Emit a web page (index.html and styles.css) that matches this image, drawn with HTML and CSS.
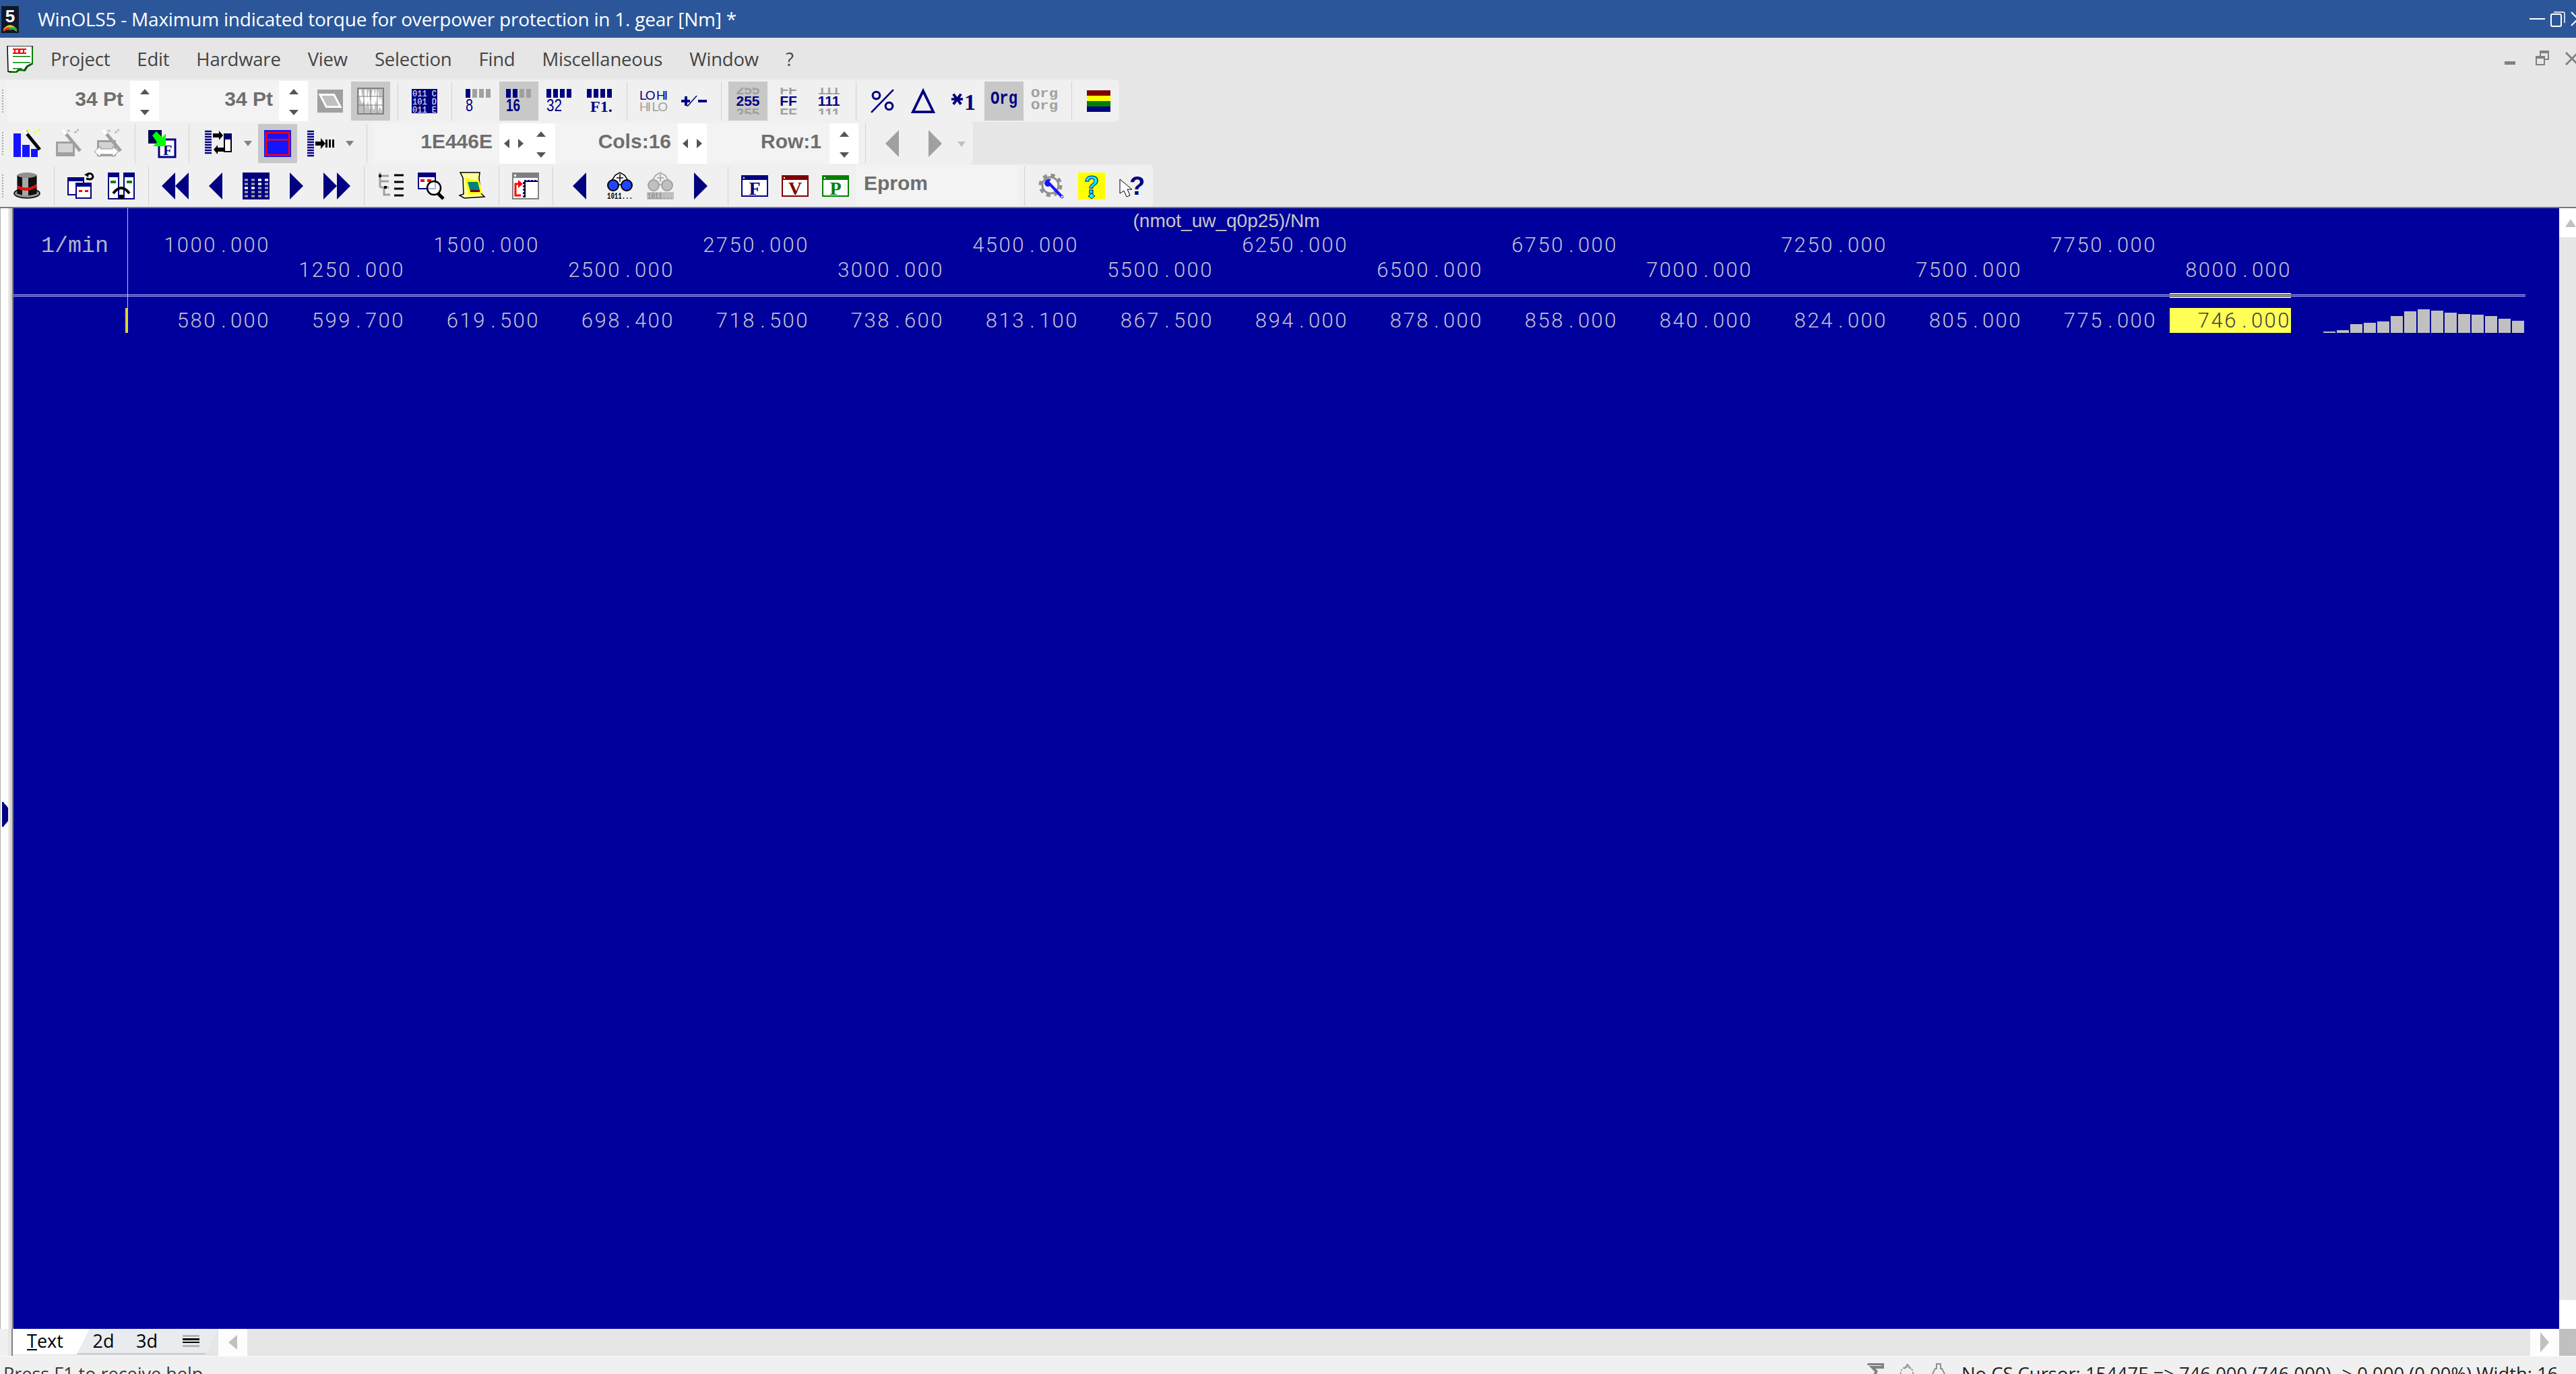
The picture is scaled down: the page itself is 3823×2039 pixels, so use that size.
FILE: index.html
```html
<!DOCTYPE html>
<html lang="en">
<head>
<meta charset="utf-8">
<title>WinOLS5</title>
<link rel="stylesheet" href="styles.css">
</head>
<body>
<div class="app">
  <header class="titlebar">
    <svg class="app-logo" viewBox="0 0 26 40"><rect width="26" height="40" fill="#101828"/><path d="M3 34 Q13 22 23 34 L23 38 Q13 30 3 38Z" fill="#e0c020"/><path d="M3 36 Q8 30 13 32 L13 36 Q8 34 3 38Z" fill="#e03020"/><path d="M13 32 Q19 30 23 34 L23 37 Q18 33 13 36Z" fill="#20b040"/><text x="13" y="24" class="logo-5">5</text></svg>
    <span class="title-text">WinOLS5 - Maximum indicated torque for overpower protection in 1. gear [Nm] *</span>
    <div class="win-ctrls">
      <svg class="wc-min" viewBox="0 0 23 3"><rect width="23" height="2" fill="#fff"/></svg>
      <svg class="wc-res" viewBox="0 0 22 24"><rect x="1" y="5" width="15" height="18" rx="2" fill="none" stroke="#fff" stroke-width="2"/><path d="M5 2H19Q21 2 21 4V18" fill="none" stroke="#fff" stroke-width="1.5"/></svg>
      <svg class="wc-x" viewBox="0 0 22 22"><path d="M1 1L21 21M21 1L1 21" stroke="#fff" stroke-width="2"/></svg>
    </div>
  </header>

  <nav class="menubar">
    <svg class="doc-icon" viewBox="0 0 40 40"><path d="M1 0H38V26L30 30L26 36L18 35L13 39L2 38Z" fill="#fff" stroke="#000" stroke-width="1.5"/><path d="M38 4V27L31 31L27 37L19 36L13 40H3" fill="none" stroke="#008000" stroke-width="2"/><rect x="9" y="4" width="20" height="2" fill="#f00"/><rect x="9" y="10" width="20" height="2" fill="#f00"/><rect x="11" y="5" width="2" height="6" fill="#f00"/><rect x="17" y="5" width="3" height="6" fill="#f00"/><rect x="24" y="5" width="2" height="6" fill="#f00"/><rect x="9" y="15" width="26" height="1.5" fill="#008000"/><rect x="9" y="24" width="26" height="1.5" fill="#008000"/><rect x="9" y="33" width="14" height="1.5" fill="#008000"/></svg>
    <span class="menu-item">Project</span>
    <span class="menu-item">Edit</span>
    <span class="menu-item">Hardware</span>
    <span class="menu-item">View</span>
    <span class="menu-item">Selection</span>
    <span class="menu-item">Find</span>
    <span class="menu-item">Miscellaneous</span>
    <span class="menu-item">Window</span>
    <span class="menu-item">?</span>
    <div class="mdi-ctrls">
      <svg class="mdi-min" viewBox="0 0 16 5"><rect width="16" height="5" fill="#808080"/></svg>
      <svg class="mdi-res" viewBox="0 0 20 22"><rect x="7" y="1" width="12" height="12" fill="#e6e6e6" stroke="#808080" stroke-width="2"/><rect x="7" y="0" width="13" height="4" fill="#808080"/><rect x="1" y="9" width="12" height="12" fill="#e6e6e6" stroke="#808080" stroke-width="2"/><rect x="1" y="8" width="13" height="4" fill="#808080"/></svg>
      <svg class="mdi-x" viewBox="0 0 20 20"><path d="M1 1L19 19M19 1L1 19" stroke="#808080" stroke-width="3"/></svg>
    </div>
  </nav>

  <div class="tb tb-1">
    <div class="grip"></div>
    <div class="field f34a">34 Pt</div>
    <div class="spin"><i class="t-up"></i><i class="t-dn"></i></div>
    <div class="field f34b">34 Pt</div>
    <div class="spin"><i class="t-up"></i><i class="t-dn"></i></div>
    <div class="gap3"></div>
    <div class="btn"><svg class="ic" viewBox="0 0 40 36"><rect width="40" height="36" fill="#a0a0a0"/><polygon points="4,8 26,8 36,27 14,27" fill="#c0c0c0" stroke="#fff" stroke-width="3"/></svg></div>
    <div class="btn on"><svg class="ic ic40" viewBox="0 0 40 40"><rect x="1" y="1" width="38" height="38" fill="#c0c0c0" stroke="#808080" stroke-width="2"/><polygon points="3,3 6,3 8,16 10,3 14,3 15,18 17,3 20,20 23,3 25,3 26,14 28,3 31,3 34,20 36,10 37,34 33,28 31,36 28,18 25,34 21,24 19,34 16,20 13,30 10,20 7,24 3,12" fill="#fff"/><path d="M10 2V38M20 2V38M30 2V38M2 13H38M2 26H38" stroke="#808080" stroke-width="1"/></svg></div>
    <div class="sep"></div>
    <div class="btn"><svg class="ic" viewBox="0 0 38 36"><rect width="38" height="36" fill="#000080"/><text class="mono-w" x="1" y="11" textLength="36" lengthAdjust="spacingAndGlyphs">011 C</text><text class="mono-w" x="1" y="23" textLength="36" lengthAdjust="spacingAndGlyphs">101 D</text><text class="mono-w" x="1" y="35" textLength="36" lengthAdjust="spacingAndGlyphs">011 E</text></svg></div>
    <div class="sep"></div>
    <div class="btn"><svg class="ic" viewBox="0 0 38 36"><rect width="7" height="13" class="n"/><rect x="10" width="7" height="13" class="g"/><rect x="20" width="7" height="13" class="g"/><rect x="30" width="7" height="13" class="g"/><text class="bits" x="0" y="33" textLength="11" lengthAdjust="spacingAndGlyphs">8</text></svg></div>
    <div class="btn on"><svg class="ic" viewBox="0 0 38 36"><rect width="7" height="13" class="n"/><rect x="10" width="7" height="13" class="n"/><rect x="20" width="7" height="13" class="g"/><rect x="30" width="7" height="13" class="g"/><text class="bits bits-b" x="0" y="33" textLength="21" lengthAdjust="spacingAndGlyphs">16</text></svg></div>
    <div class="btn"><svg class="ic" viewBox="0 0 38 36"><rect width="7" height="13" class="n"/><rect x="10" width="7" height="13" class="n"/><rect x="20" width="7" height="13" class="n"/><rect x="30" width="7" height="13" class="n"/><text class="bits" x="0" y="33" textLength="23" lengthAdjust="spacingAndGlyphs">32</text></svg></div>
    <div class="btn"><svg class="ic" viewBox="0 0 38 36"><rect width="7" height="13" class="n"/><rect x="10" width="7" height="13" class="n"/><rect x="20" width="7" height="13" class="n"/><rect x="30" width="7" height="13" class="n"/><text class="bits-s" x="5" y="34">F1.</text></svg></div>
    <div class="sep"></div>
    <div class="btn"><svg class="ic ic-lohi" viewBox="0 0 42 36"><text class="lohi n" x="0" y="16" textLength="42">LO HI</text><text class="lohi g" x="0" y="33" textLength="42">HI LO</text></svg></div>
    <div class="btn"><svg class="ic" viewBox="0 0 38 16"><rect x="0" y="6" width="13" height="4" class="n"/><rect x="5" y="1" width="4" height="14" class="n"/><polygon points="8,16 22,0 24,0 10,16" class="n"/><rect x="25" y="6" width="13" height="4" class="n"/></svg></div>
    <div class="sep"></div>
    <div class="btn on"><svg class="ic ic-num" viewBox="0 0 38 40"><svg width="38" height="10"><text class="num g" x="19" y="10">255</text></svg><text class="num n" x="19" y="27">255</text><svg y="30" width="38" height="10"><text class="num g" x="19" y="15">255</text></svg></svg></div>
    <div class="btn"><svg class="ic ic-num" viewBox="0 0 38 40"><svg width="38" height="10"><text class="num g" x="19" y="10">FF</text></svg><text class="num n" x="19" y="27">FF</text><svg y="30" width="38" height="10"><text class="num g" x="19" y="15">FF</text></svg></svg></div>
    <div class="btn"><svg class="ic ic-num" viewBox="0 0 38 40"><svg width="38" height="10"><text class="num g" x="19" y="10">111</text></svg><text class="num n" x="19" y="27">111</text><svg y="30" width="38" height="10"><text class="num g" x="19" y="15">111</text></svg></svg></div>
    <div class="sep"></div>
    <div class="btn"><svg class="ic" viewBox="0 0 34 34"><circle cx="8" cy="9" r="5" fill="none" stroke="#000080" stroke-width="3"/><circle cx="26" cy="24" r="5" fill="none" stroke="#000080" stroke-width="3"/><path d="M1 33L32 1" stroke="#000080" stroke-width="2.5"/></svg></div>
    <div class="btn"><svg class="ic" viewBox="0 0 38 38"><polygon points="19,3 35,36 3,36" fill="none" stroke="#000080" stroke-width="4"/></svg></div>
    <div class="btn"><svg class="ic" viewBox="0 0 40 30"><path d="M1 12H19M4 4L16 20M16 4L4 20" stroke="#000080" stroke-width="4"/><text class="one" x="21" y="29">1</text></svg></div>
    <div class="btn on"><svg class="ic ic-org" viewBox="0 0 40 28"><text class="org n" x="0" y="18" textLength="40" lengthAdjust="spacingAndGlyphs">Org</text></svg></div>
    <div class="btn"><svg class="ic ic-orgs" viewBox="0 0 40 38"><text class="org-s g" x="0" y="13" textLength="40" lengthAdjust="spacingAndGlyphs">Org</text><text class="org-s g" x="0" y="31" textLength="40" lengthAdjust="spacingAndGlyphs">Org</text></svg></div>
    <div class="sep"></div>
    <div class="btn"><svg class="ic ic-flag" viewBox="0 0 35 32"><rect width="35" height="8" fill="#800000"/><rect y="8" width="35" height="8" fill="#ff0"/><rect y="16" width="35" height="8" fill="#008000"/><rect y="24" width="35" height="8" fill="#000080"/></svg></div>
  </div>

  <div class="tb tb-2">
    <div class="grip"></div>
    <div class="btn"><svg class="ic ic40" viewBox="0 0 40 40"><rect x="0" y="5" width="11" height="35" fill="#1414ff"/><rect x="13" y="22" width="11" height="18" fill="#1414ff"/><rect x="26" y="28" width="10" height="12" fill="#1414ff"/><path d="M17 2L39 29" stroke="#000" stroke-width="5"/><path d="M15 0L20 6" stroke="#fff" stroke-width="5"/><path d="M20 0h3M31 3h3M36 0h3" stroke="#ff0" stroke-width="3"/></svg></div>
    <div class="btn"><svg class="ic ic40" viewBox="0 0 40 40"><rect x="3" y="17" width="28" height="22" fill="#a0a0a0"/><rect x="6" y="20" width="22" height="13" fill="#d4d4d4"/><path d="M15 2L39 31" stroke="#a0a0a0" stroke-width="5"/><path d="M13 0L18 6" stroke="#fff" stroke-width="5"/><path d="M20 1h4M30 3h4M34 0h3" stroke="#c0c0c0" stroke-width="3"/></svg></div>
    <div class="btn"><svg class="ic ic40" viewBox="0 0 40 40"><rect x="4" y="15" width="28" height="24" fill="#a0a0a0"/><rect x="7" y="18" width="22" height="11" fill="#d4d4d4"/><path d="M15 2L39 31" stroke="#a0a0a0" stroke-width="5"/><path d="M13 0L18 6" stroke="#fff" stroke-width="5"/><path d="M20 1h4M30 3h4M34 0h3" stroke="#c0c0c0" stroke-width="3"/><polygon points="0,32 9,24 9,28 27,28 27,24 36,32 27,40 27,36 9,36 9,40" fill="#fff" stroke="#909090" stroke-width="1"/></svg></div>
    <div class="sep"></div>
    <div class="btn"><svg class="ic ic40" viewBox="0 0 40 40"><rect width="20" height="20" fill="#000050"/><rect x="16" y="14" width="24" height="26" fill="#fff" stroke="#000080" stroke-width="3"/><text class="serif-f" x="22" y="37">F</text><polygon points="6,8 12,2 21,11 26,5 26,24 7,24 13,18" fill="#0f0"/></svg></div>
    <div class="sep"></div>
    <div class="split split-a">
      <svg class="ic ic40" viewBox="0 0 40 40"><path d="M0 2h10M0 6h10M0 10h10M0 14h10M0 18h10M0 22h10M0 26h10M0 30h10M0 34h10" stroke="#000080" stroke-width="2.6"/><polygon points="13,5 22,5 22,1 28,8 22,15 22,11 13,11" fill="#000" transform="translate(-1,0)"/><polygon points="28,26 19,26 19,22 13,29 19,36 19,32 28,32" fill="#000"/><rect x="29" y="6" width="10" height="26" fill="#fff" stroke="#000" stroke-width="2"/><rect x="29" y="6" width="10" height="8" fill="#000080"/></svg>
      <i class="caret"></i>
    </div>
    <div class="btn on"><svg class="ic ic40" viewBox="0 0 40 40"><rect width="40" height="40" fill="#1414ff"/><rect x="3" y="4" width="34" height="33" fill="none" stroke="#f00" stroke-width="2.5"/><rect x="3" y="13" width="34" height="2.5" fill="#f00"/></svg></div>
    <div class="split split-b">
      <svg class="ic ic40" viewBox="0 0 40 40"><path d="M0 2h10M0 6h10M0 10h10M0 14h10M0 18h10M0 22h10M0 26h10M0 30h10M0 34h10M0 38h10" stroke="#000080" stroke-width="2.6"/><polygon points="12,17 20,17 20,12 27,20 20,28 20,23 12,23" fill="#000"/><rect x="27" y="14" width="3" height="12" fill="#000"/><rect x="32" y="14" width="3" height="12" fill="#000"/><rect x="37" y="14" width="3" height="12" fill="#000"/></svg>
      <i class="caret"></i>
    </div>
    <div class="sep"></div>
    <div class="field faddr">1E446E</div>
    <div class="spin spin-wide">
      <div class="lr"><i class="t-lf"></i><i class="t-rt"></i></div>
      <div class="ud"><i class="t-up"></i><i class="t-dn"></i></div>
    </div>
    <div class="field fcols">Cols:16</div>
    <div class="spin"><div class="lr lr-tight"><i class="t-lf"></i><i class="t-rt"></i></div></div>
    <div class="field frow">Row:1</div>
    <div class="spin"><i class="t-up"></i><i class="t-dn"></i></div>
    <div class="sep"></div>
    <div class="btn"><svg class="ic ic-nav" viewBox="0 0 20 40"><polygon points="0,20 20,0 20,40" fill="#a0a0a0"/></svg></div>
    <div class="btn btn-shift"><svg class="ic ic-nav" viewBox="0 0 20 40"><polygon points="0,0 20,20 0,40" fill="#a0a0a0"/></svg></div>
    <i class="caret caret-dim"></i>
  </div>

  <div class="tb tb-3">
    <div class="grip"></div>
    <div class="btn"><svg class="ic ic40" viewBox="0 0 40 40"><ellipse cx="20" cy="31" rx="19" ry="7" fill="#909090" stroke="#000" stroke-width="1.5"/><path d="M6 4Q20 -2 34 4V31Q20 36 6 31Z" fill="#111" stroke="#000"/><rect x="13" y="3" width="9" height="31" fill="#a8a8a8"/><ellipse cx="20" cy="4" rx="14" ry="4" fill="#909090"/><path d="M6 19Q20 27 34 17V22Q20 31 6 24Z" fill="#e01010"/></svg></div>
    <div class="sep"></div>
    <div class="btn"><svg class="ic ic40" viewBox="0 0 40 40"><rect x="1" y="8" width="23" height="25" fill="#fff" stroke="#000080" stroke-width="2"/><rect x="1" y="8" width="23" height="5" fill="#000080"/><rect x="13" y="16" width="22" height="22" fill="#fff" stroke="#000080" stroke-width="2"/><rect x="13" y="16" width="22" height="5" fill="#000080"/><rect x="17" y="26" width="5" height="3" fill="#f00"/><rect x="26" y="26" width="5" height="3" fill="#f00"/><path d="M28 9Q37 12 38 6Q37 0 30 2" fill="none" stroke="#000" stroke-width="3"/><polygon points="25,3 32,0 31,7" fill="#000"/></svg></div>
    <div class="btn"><svg class="ic ic40" viewBox="0 0 40 40"><rect x="1" y="1" width="15" height="38" fill="#fff" stroke="#000080" stroke-width="2"/><rect x="24" y="1" width="15" height="38" fill="#fff" stroke="#000080" stroke-width="2"/><rect x="1" y="1" width="15" height="6" fill="#000080"/><rect x="24" y="1" width="15" height="6" fill="#000080"/><rect x="4" y="12" width="8" height="4" fill="#008000"/><rect x="28" y="12" width="8" height="4" fill="#008000"/><path d="M8 31Q20 15 32 31" fill="none" stroke="#000" stroke-width="4"/><rect x="17" y="33" width="6" height="7" fill="#000"/></svg></div>
    <div class="sep"></div>
    <div class="btn"><svg class="ic ic40" viewBox="0 0 40 40"><polygon points="0,20 20,0 20,40" class="n"/><polygon points="20,20 40,0 40,40" class="n"/></svg></div>
    <div class="btn"><svg class="ic ic-nav" viewBox="0 0 20 40"><polygon points="0,20 20,0 20,40" class="n"/></svg></div>
    <div class="btn"><svg class="ic ic40" viewBox="0 0 40 40"><rect width="40" height="40" class="n"/><path d="M3 11h5M13 11h5M23 11h5M33 11h5M3 17h5M13 17h5M23 17h5M33 17h5M3 23h5M13 23h5M23 23h5M33 23h5M3 29h5M13 29h5M23 29h5M33 29h5M3 35h5M13 35h5M23 35h5M33 35h5" stroke="#a8a8a8" stroke-width="3"/><path d="M23 11h5M33 11h5M3 23h5M13 23h5M23 17h5" stroke="#fff" stroke-width="3"/></svg></div>
    <div class="btn"><svg class="ic ic-nav" viewBox="0 0 20 40"><polygon points="0,0 20,20 0,40" class="n"/></svg></div>
    <div class="btn"><svg class="ic ic40" viewBox="0 0 40 40"><polygon points="0,0 20,20 0,40" class="n"/><polygon points="20,0 40,20 20,40" class="n"/></svg></div>
    <div class="sep"></div>
    <div class="btn"><svg class="ic ic40" viewBox="0 0 38 40"><path d="M3 0V22M3 5H16M3 22H16M9 22V33H18M3 13H16" fill="none" stroke="#a0a0a0" stroke-width="3"/><rect x="1" y="3" width="4" height="4" fill="#000"/><rect x="9" y="20" width="4" height="4" fill="#000"/><path d="M24 4h14M24 14h14M24 24h14M24 34h14" stroke="#000" stroke-width="3"/></svg></div>
    <div class="btn"><svg class="ic ic40" viewBox="0 0 40 40"><rect x="1" y="1" width="25" height="23" fill="#fff" stroke="#000080" stroke-width="2"/><rect x="1" y="1" width="25" height="6" fill="#000080"/><rect x="4" y="10" width="6" height="4" fill="#f00"/><rect x="14" y="10" width="6" height="4" fill="#f00"/><circle cx="24" cy="23" r="10" fill="#fff" fill-opacity=".7" stroke="#000" stroke-width="2.5"/><path d="M30 31L38 39" stroke="#000" stroke-width="5"/></svg></div>
    <div class="btn"><svg class="ic ic40" viewBox="0 0 40 40"><polygon points="3,0 32,0 31,8 33,30 39,36 9,38 2,34 8,32 7,8" fill="#ffffa0" stroke="#000" stroke-width="1.5"/><polygon points="10,8 31,12 36,31 15,33" fill="#ff0"/><polygon points="14,14 29,14 32,26 18,28" fill="#008080"/><rect x="18" y="26" width="14" height="3" fill="#800000"/></svg></div>
    <div class="sep"></div>
    <div class="btn"><svg class="ic ic40" viewBox="0 0 40 40"><rect x="1" y="1" width="38" height="38" fill="#fff" stroke="#808080" stroke-width="2"/><rect x="1" y="1" width="38" height="7" fill="#808080"/><rect x="3" y="3" width="3" height="3" fill="#fff"/><path d="M18 12H36" stroke="#00f" stroke-width="2" stroke-dasharray="3 2"/><path d="M19 13H38M19 13V37" stroke="#000" stroke-width="2"/><path d="M17 14V37" stroke="#00f" stroke-width="2" stroke-dasharray="3 2"/><path d="M13 34H5V17H10" fill="none" stroke="#f00" stroke-width="3"/><polygon points="9,11 16,17 9,23" fill="#f00"/></svg></div>
    <div class="sep"></div>
    <div class="btn"><svg class="ic ic-nav" viewBox="0 0 20 40"><polygon points="0,20 20,0 20,40" class="n"/></svg></div>
    <div class="btn"><svg class="ic ic40" viewBox="0 0 40 40"><path d="M13 4L20 0L27 4L36 18H4Z" fill="#fff" stroke="#000" stroke-width="1.5"/><path d="M20 2V14M15 8H25" stroke="#000" stroke-width="1.5"/><circle cx="10" cy="19" r="8" fill="#1e46ff" stroke="#000" stroke-width="2"/><circle cx="30" cy="19" r="8" fill="#1e46ff" stroke="#000" stroke-width="2"/><text class="ten" x="1" y="39" textLength="38" lengthAdjust="spacingAndGlyphs">1011...</text></svg></div>
    <div class="btn"><svg class="ic ic40" viewBox="0 0 40 40"><path d="M13 4L20 0L27 4L36 18H4Z" fill="#eee" stroke="#a0a0a0" stroke-width="1.5"/><path d="M20 2V14M15 8H25" stroke="#a0a0a0" stroke-width="1.5"/><circle cx="10" cy="19" r="8" fill="#c0c0c0" stroke="#a0a0a0" stroke-width="2"/><circle cx="30" cy="19" r="8" fill="#c0c0c0" stroke="#a0a0a0" stroke-width="2"/><rect y="29" width="40" height="11" fill="#c0c0c0"/><text class="ten ten-off" x="1" y="39" textLength="38" lengthAdjust="spacingAndGlyphs">1011...</text></svg></div>
    <div class="btn"><svg class="ic ic-nav" viewBox="0 0 20 40"><polygon points="0,0 20,20 0,40" class="n"/></svg></div>
    <div class="sep"></div>
    <div class="btn"><svg class="ic ic-win" viewBox="0 0 40 32"><rect x="1" y="1" width="38" height="30" fill="#fff" stroke="#000080" stroke-width="2"/><rect x="1" y="1" width="38" height="6" fill="#000080"/><rect x="3" y="3" width="2" height="2" fill="#fff"/><text class="win-letter" x="20" y="29" fill="#000080">F</text></svg></div>
    <div class="btn"><svg class="ic ic-win" viewBox="0 0 40 32"><rect x="1" y="1" width="38" height="30" fill="#fff" stroke="#800000" stroke-width="2"/><rect x="1" y="1" width="38" height="6" fill="#800000"/><rect x="3" y="3" width="2" height="2" fill="#fff"/><text class="win-letter" x="20" y="29" fill="#800000">V</text></svg></div>
    <div class="btn"><svg class="ic ic-win" viewBox="0 0 40 32"><rect x="1" y="1" width="38" height="30" fill="#fff" stroke="#008000" stroke-width="2"/><rect x="1" y="1" width="38" height="6" fill="#008000"/><rect x="3" y="3" width="2" height="2" fill="#fff"/><text class="win-letter" x="20" y="29" fill="#008000">P</text></svg></div>
    <div class="field feprom">Eprom</div>
    <div class="sep"></div>
    <div class="btn"><svg class="ic ic40" viewBox="0 0 40 40"><circle cx="19" cy="19" r="15" fill="none" stroke="#909090" stroke-width="5" stroke-dasharray="6 5.8"/><circle cx="19" cy="19" r="12" fill="#f4f4f4" stroke="#909090" stroke-width="3"/><path d="M15 14L36 36" stroke="#1414ff" stroke-width="4"/><path d="M10 16Q12 8 20 10L16 15L20 19Q12 24 10 16Z" fill="#1414ff"/><circle cx="36" cy="36" r="2" fill="#fff" stroke="#1414ff"/></svg></div>
    <div class="btn"><svg class="ic ic40" viewBox="0 0 40 40"><rect width="40" height="40" fill="#ff0"/><text class="help" x="20" y="31">?</text><polygon points="20,31 25,35 20,39 15,35" fill="#0ff" stroke="#000080"/></svg></div>
    <div class="btn"><svg class="ic ic40" viewBox="0 0 36 40"><polygon points="0,10 0,31 6,27 10,36 15,34 11,25 18,25" fill="#fff" stroke="#000" stroke-width="1"/><text class="what" x="14" y="33">?</text></svg></div>
  </div>

  <div class="work">
    <aside class="left-rail"><svg class="rail-arrow" viewBox="0 0 9 37"><polygon points="0,0 2,0 4,3 7,6 9,9 9,28 7,31 4,34 2,37 0,37" fill="#000080"/></svg></aside>
    <main class="sheet">
      <div class="vline"></div>
      <div class="sheet-title">(nmot_uw_q0p25)/Nm</div>
      <div class="axis">
        <div class="axis-unit">1/min</div>
        <div class="tick">1000<b>.</b>000</div>
        <div class="tick low">1250<b>.</b>000</div>
        <div class="tick">1500<b>.</b>000</div>
        <div class="tick low">2500<b>.</b>000</div>
        <div class="tick">2750<b>.</b>000</div>
        <div class="tick low">3000<b>.</b>000</div>
        <div class="tick">4500<b>.</b>000</div>
        <div class="tick low">5500<b>.</b>000</div>
        <div class="tick">6250<b>.</b>000</div>
        <div class="tick low">6500<b>.</b>000</div>
        <div class="tick">6750<b>.</b>000</div>
        <div class="tick low">7000<b>.</b>000</div>
        <div class="tick">7250<b>.</b>000</div>
        <div class="tick low">7500<b>.</b>000</div>
        <div class="tick">7750<b>.</b>000</div>
        <div class="tick low">8000<b>.</b>000</div>
      </div>
      <div class="rule"><div class="rule-mark"></div></div>
      <div class="data">
        <div class="row-mark"></div>
        <div class="val">580<b>.</b>000</div>
        <div class="val">599<b>.</b>700</div>
        <div class="val">619<b>.</b>500</div>
        <div class="val">698<b>.</b>400</div>
        <div class="val">718<b>.</b>500</div>
        <div class="val">738<b>.</b>600</div>
        <div class="val">813<b>.</b>100</div>
        <div class="val">867<b>.</b>500</div>
        <div class="val">894<b>.</b>000</div>
        <div class="val">878<b>.</b>000</div>
        <div class="val">858<b>.</b>000</div>
        <div class="val">840<b>.</b>000</div>
        <div class="val">824<b>.</b>000</div>
        <div class="val">805<b>.</b>000</div>
        <div class="val">775<b>.</b>000</div>
        <div class="val sel"><span>746<b>.</b>000</span></div>
        <div class="spark">
          <i style="height:2px"></i><i style="height:4px"></i><i style="height:13px"></i><i style="height:15px"></i><i style="height:17px"></i><i style="height:25px"></i><i style="height:32px"></i><i style="height:35px"></i><i style="height:33px"></i><i style="height:30px"></i><i style="height:28px"></i><i style="height:27px"></i><i style="height:25px"></i><i style="height:21px"></i><i style="height:18px"></i>
        </div>
      </div>
    </main>
    <aside class="vscroll">
      <div class="sb-btn"><i class="sb-up"></i></div>
      <div class="sb-btn"></div>
    </aside>
  </div>

  <div class="tabbar">
    <div class="tab-rail"></div>
    <div class="tab tab-on"><span class="ul">T</span>ext</div>
    <div class="tab tab-2d">2d</div>
    <div class="tab tab-3d">3d</div>
    <div class="tab tab-eq"><i class="eq"></i></div>
    <div class="hs-btn hs-l"><i class="hs-lf"></i></div>
    <div class="hs-track"></div>
    <div class="hs-btn hs-r"><i class="hs-rt"></i></div>
    <div class="hs-corner"></div>
  </div>

  <footer class="status">
    <div class="st-left">Press F1 to receive help</div>
    <div class="st-icons">
      <svg class="st-ic" viewBox="0 0 25 26"><path d="M1 1H24V6H8L14 12L9 26" fill="none" stroke="#808080" stroke-width="4"/></svg>
      <svg class="st-ic" viewBox="0 0 28 26"><circle cx="14" cy="15" r="10" fill="none" stroke="#909090" stroke-width="2" stroke-dasharray="3 2"/><path d="M10 8L15 1L20 8" fill="none" stroke="#909090" stroke-width="2"/></svg>
      <svg class="st-ic" viewBox="0 0 26 26"><path d="M1 22L8 8H10V1H16V8H18L25 22" fill="none" stroke="#909090" stroke-width="2"/></svg>
    </div>
    <div class="st-right">No CS Cursor: 15447E =&gt; 746.000 (746.000) -&gt; 0.000 (0.00%) Width: 16</div>
  </footer>
</div>
</body>
</html>
```

FILE: styles.css
```css
* { box-sizing: border-box; }
html, body { margin: 0; padding: 0; height: 100%; overflow: hidden; background: #e6e6e6; }
.app { width: 3823px; height: 2039px; display: flex; flex-direction: column; overflow: hidden; font-family: "Open Sans", sans-serif; }

.titlebar { height: 56px; flex: none; background: #2b579a; display: flex; align-items: center; color: #fff; padding-left: 2px; }
.app-logo { width: 26px; height: 40px; flex: none; margin-top: 1px; }
.logo-5 { font: bold 26px "Liberation Sans", sans-serif; fill: #fff; text-anchor: middle; }
.title-text { margin-left: 28px; font-size: 28px; white-space: nowrap; letter-spacing: -0.23px; }
.win-ctrls { margin-left: auto; display: flex; align-items: center; gap: 8px; width: 69px; flex: none; }
.wc-min { width: 23px; height: 3px; flex: none; }
.wc-res { width: 22px; height: 24px; flex: none; }
.wc-x { width: 22px; height: 22px; flex: none; }

.menubar { height: 62px; flex: none; background: #e6e6e6; display: flex; align-items: center; padding-left: 10px; }
.doc-icon { width: 40px; height: 40px; flex: none; margin-right: 25px; margin-top: 1px; }
.menu-item { font-size: 27.5px; color: #444; margin-right: 40px; letter-spacing: -0.2px; }
.mdi-ctrls { margin-left: auto; width: 106px; flex: none; display: flex; align-items: flex-start; height: 24px; }
.mdi-min { width: 16px; height: 5px; margin-top: 16px; flex: none; }
.mdi-res { width: 20px; height: 22px; margin-left: 30px; flex: none; }
.mdi-x { width: 20px; height: 20px; margin-left: 24px; flex: none; margin-top: 2px; }

.tb { height: 63px; flex: none; width: fit-content; background: #f0f0f0; display: flex; align-items: flex-start; padding: 2px 1px 0 10px; position: relative; border-radius: 0 6px 6px 0; }
.grip { position: absolute; left: 3px; top: 15px; height: 34px; width: 2px; background: repeating-linear-gradient(to bottom, #a8a8a8 0 2px, transparent 2px 4px); }
.btn { width: 58px; height: 58px; margin: 1px; flex: none; display: flex; align-items: center; justify-content: center; }
.btn.on { background: #c8c8c8; }
.btn-shift { margin-left: 5px; margin-right: -1px; }
.sep { width: 20px; height: 58px; margin-top: 1px; flex: none; position: relative; }
.sep::before { content: ""; position: absolute; left: 10px; top: 0; bottom: 0; width: 1px; background: #d2d2d2; }
.gap3 { width: 3px; flex: none; }
.ic { width: 38px; height: 36px; display: block; overflow: visible; }
.ic40 { width: 40px; height: 40px; }
.ic-nav { width: 20px; height: 40px; }
.ic-flag { width: 35px; height: 32px; }
.ic-win { width: 40px; height: 32px; }
.ic-lohi { width: 42px; height: 36px; }
.ic-num { width: 38px; height: 40px; }
.ic-org { width: 40px; height: 28px; }
.ic-orgs { width: 40px; height: 38px; }
.n { fill: #000080; }
.g { fill: #a0a0a0; }

.field { height: 60px; flex: none; background: #f3f3f3; color: #6e6e6e; font: bold 30px/54px "Liberation Sans", sans-serif; text-align: right; padding-right: 10px; }
.f34a { width: 183px; }
.f34b { width: 178px; padding-right: 9px; }
.faddr { width: 187px; }
.fcols { width: 182px; }
.frow { width: 182px; padding-right: 12px; }
.feprom { width: 240px; text-align: left; padding-left: 12px; margin-top: -1px; }
.spin { width: 43px; height: 60px; flex: none; background: #fff; display: flex; flex-direction: column; align-items: center; justify-content: flex-start; padding-top: 12px; gap: 23px; }
.spin-wide { width: 83px; flex-direction: row; align-items: flex-start; justify-content: flex-start; padding: 12px 0 0 7px; gap: 0; }
.lr { display: flex; gap: 13px; margin-top: 11px; }
.lr-tight { gap: 13px; }
.ud { display: flex; flex-direction: column; gap: 23px; margin-left: 19px; }
.t-up { display: block; width: 0; height: 0; border: solid transparent; border-width: 0 7px 8px; border-bottom-color: #555; }
.t-dn { display: block; width: 0; height: 0; border: solid transparent; border-width: 8px 7px 0; border-top-color: #555; }
.t-lf { display: block; width: 0; height: 0; border: solid transparent; border-width: 7px 8px 7px 0; border-right-color: #555; }
.t-rt { display: block; width: 0; height: 0; border: solid transparent; border-width: 7px 0 7px 8px; border-left-color: #555; }
.caret { display: block; flex: none; width: 0; height: 0; border: solid transparent; border-width: 8px 6px 0; border-top-color: #808080; }
.caret-dim { border-top-color: #c0c0c0; margin: 27px 10px 0 5px; }
.split { height: 58px; margin-top: 1px; flex: none; display: flex; align-items: center; padding-left: 14px; gap: 18px; }
.split-a { width: 92px; }
.split-b { width: 92px; gap: 17px; }

.mono-w { font: 12px "Liberation Mono", monospace; fill: #fff; }
.bits { font: 25px "Liberation Sans", sans-serif; fill: #000080; }
.bits-b { font-weight: bold; }
.bits-s { font: bold 24px "Liberation Serif", serif; fill: #000080; }
.lohi { font: 19px "Liberation Sans", sans-serif; }
.num { font: bold 21px "Liberation Sans", sans-serif; text-anchor: middle; }
.one { font: bold 36px "Liberation Serif", serif; fill: #000080; }
.org { font: bold 27px "Liberation Mono", monospace; }
.org-s { font: bold 19px "Liberation Mono", monospace; }
.serif-f { font: bold 22px "Liberation Serif", serif; fill: #000080; }
.ten { font: bold 13px "Liberation Mono", monospace; fill: #000; }
.ten-off { fill: #909090; }
.win-letter { font: bold 28px "Liberation Serif", serif; text-anchor: middle; }
.help { font: bold 36px "Liberation Sans", sans-serif; fill: #0ff; stroke: #000080; stroke-width: 1px; text-anchor: middle; }
.what { font: bold 38px "Liberation Sans", sans-serif; fill: #000080; }

.work { flex: 1; min-height: 0; display: flex; border-top: 2px solid #787878; }
.left-rail { width: 20px; flex: none; background: linear-gradient(to right, #b0b0b0 0 1px, #fff 1px 12px, #e6e6e6 12px 15px, #d0d0d0 15px 18px, #808080 18px 20px); position: relative; }
.rail-arrow { position: absolute; left: 3px; top: 881px; width: 9px; height: 37px; }
.sheet { width: 3778px; flex: none; background: #00009c; position: relative; font-family: "Roboto", sans-serif; font-weight: 300; color: #c4c4d4; }
.vline { position: absolute; left: 169px; top: 0; width: 1px; height: 185px; background: #c0c0ff; }
.sheet-title { height: 36px; font: 28px/38px "Liberation Sans", sans-serif; color: #c8c8c8; text-align: center; padding-right: 178px; }
.axis { display: grid; grid-template-columns: 180px repeat(16, 200px); align-items: start; font-size: 31px; line-height: 37px; letter-spacing: 2.5px; }
.axis-unit { padding-left: 41px; padding-top: 2px; font: 33.3px/37px "Liberation Mono", monospace; letter-spacing: 0; color: #b4b4cc; }
.tick, .val { text-align: right; height: 37px; white-space: nowrap; margin-right: -1px; }
.low { margin-top: 37px; }
b { font-weight: 300; display: inline-block; width: 20px; text-align: center; letter-spacing: 0; }
.rule { margin-top: 16px; height: 7px; border-top: 2px solid transparent; border-bottom: 2px solid transparent; position: relative; width: 3728px; display: grid; grid-template-columns: 3200px 180px; background: linear-gradient(to bottom, #c0c0ff 0 1px, transparent 1px 2px, #c0c0ff 2px 3px); background-clip: padding-box; }
.rule-mark { grid-column: 2; margin: -2px 0; height: 7px; background: linear-gradient(to bottom, #ffff55 0 2px, #00009c 2px 3px, #ffff55 3px 4px, #00009c 4px 5px, #ffff55 5px 7px); }
.data { margin-top: 15px; display: grid; grid-template-columns: 180px repeat(16, 200px) 300px; align-items: start; font-size: 31px; line-height: 37px; letter-spacing: 2.5px; }
.row-mark { width: 4px; height: 37px; margin-left: 166px; background: #d8d830; }
.sel { padding-left: 20px; margin-right: 0; }
.sel span { display: block; background: #ffff55; color: #404040; height: 37px; }
.spark { margin-left: 48px; width: 300px; height: 37px; display: flex; align-items: flex-end; gap: 2px; }
.spark i { width: 18px; flex: none; background: #c0c0c0; }
.vscroll { flex: 1; background: #e6e6e6; display: flex; flex-direction: column; justify-content: space-between; }
.sb-btn { height: 43px; background: #fff; padding: 16px 0 0 9px; }
.sb-up { display: block; width: 0; height: 0; border: solid transparent; border-width: 0 8px 12px; border-bottom-color: #c0c0c0; }

.tabbar { height: 41px; flex: none; display: flex; background: #e6e6e6; border-bottom: 1px solid #fafafa; }
.tab-rail { width: 19px; flex: none; background: linear-gradient(to right, #f0f0f0 0 12px, #e6e6e6 12px); border-right: 2px solid #808080; }
.tab { height: 38px; flex: none; font-size: 27px; line-height: 36px; color: #000; background: #e8ecef; border-bottom: 2px solid #c4c8cc; clip-path: polygon(0 100%, 19px 0, 100% 0, calc(100% - 19px) 100%); text-align: center; }
.tab-on { width: 114px; background: #fff; clip-path: polygon(0 0, 100% 0, calc(100% - 19px) 100%, 0 100%); border-bottom: 2px solid #fff; text-align: left; padding-left: 21px; }
.tab-2d { width: 84px; margin-left: -19px; padding-right: 5px; }
.tab-3d { width: 83px; margin-left: -19px; padding-right: 5px; }
.tab-eq { width: 81px; margin-left: -19px; display: flex; align-items: center; justify-content: center; }
.ul { text-decoration: underline; }
.eq { display: block; width: 25px; height: 18px; background: linear-gradient(to bottom, #b4b4b4 0 3px, transparent 3px 5px, #000 5px 8px, transparent 8px 10px, #000 10px 12px, transparent 12px 15px, #b4b4b4 15px 18px); }
.hs-btn { width: 43px; height: 40px; flex: none; background: #fff; display: flex; align-items: center; justify-content: center; }
.hs-l { background: #fdfdfd; }
.hs-r { background: #fdfdfd; }
.hs-lf { display: block; width: 0; height: 0; border: solid transparent; border-width: 11px 13px 11px 0; border-right-color: #c0c0c0; }
.hs-rt { display: block; width: 0; height: 0; border: solid transparent; border-width: 15px 0 15px 13px; border-left-color: #c0c0c0; }
.hs-track { flex: 1; }
.hs-corner { width: 25px; flex: none; background: #c0c0c0; }

.status { height: 26px; flex: none; background: #f0f0f0; display: flex; overflow: hidden; font-size: 27px; line-height: 36px; color: #3c3c3c; white-space: nowrap; }
.st-left { width: 2770px; flex: none; padding-left: 5px; padding-top: 8px; }
.st-icons { width: 141px; flex: none; display: flex; gap: 21px; padding-top: 10px; align-items: flex-start; }
.st-ic { width: 26px; height: 26px; flex: none; }
.st-right { padding-top: 8px; color: #222; font-size: 27.4px; }
```
